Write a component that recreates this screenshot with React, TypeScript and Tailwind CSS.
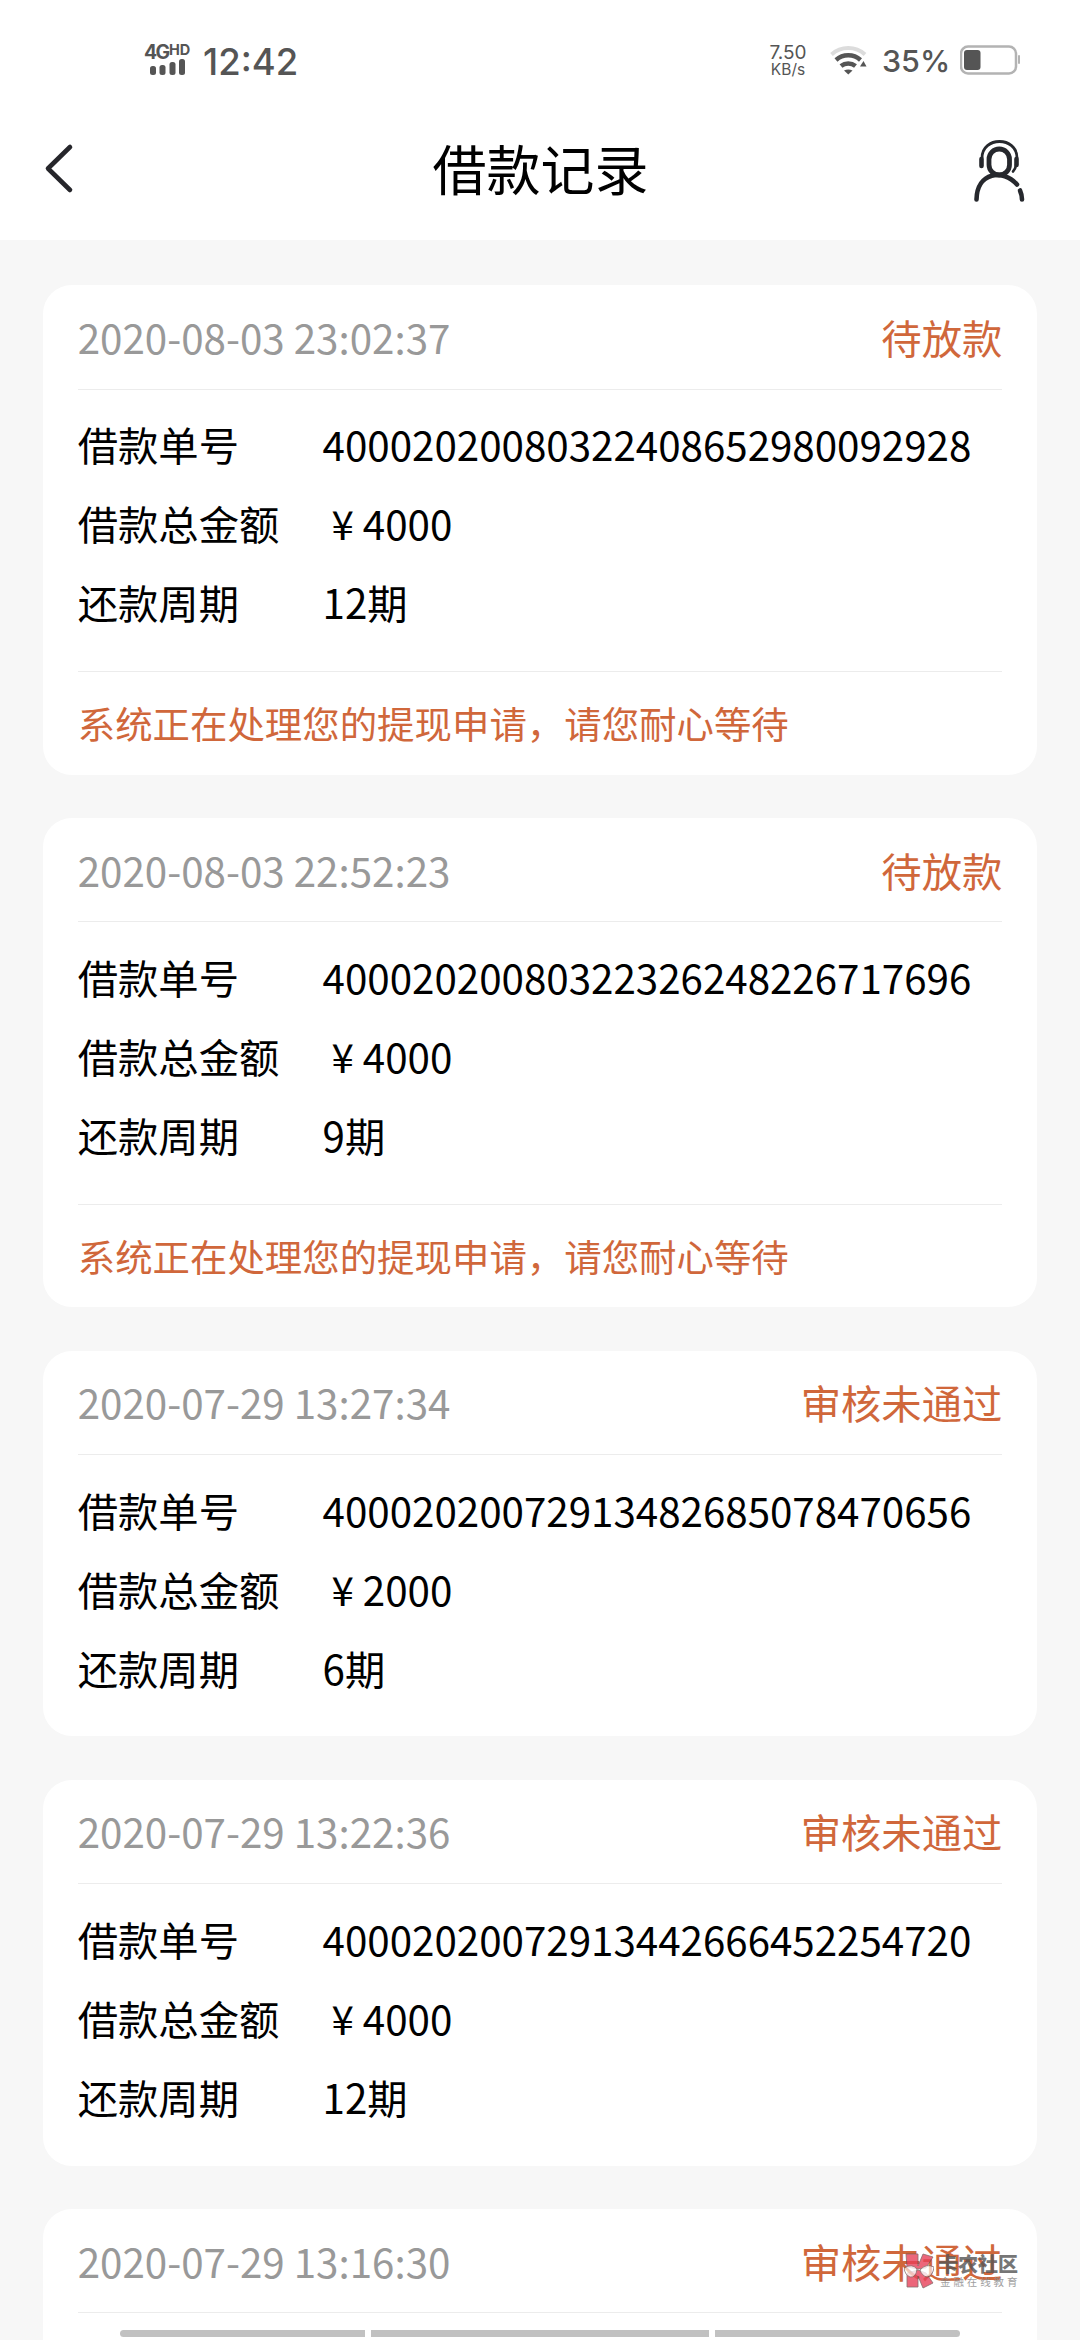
interface LoanRecord {
  time: string;
  status: string;
  orderNo?: string;
  amount?: string;
  period?: string;
  tip?: string;
}

const waiting = "系统正在处理您的提现申请，请您耐心等待";

const records: LoanRecord[] = [
  {
    time: "2020-08-03 23:02:37",
    status: "待放款",
    orderNo: "40002020080322408652980092928",
    amount: "4000",
    period: "12期",
    tip: waiting,
  },
  {
    time: "2020-08-03 22:52:23",
    status: "待放款",
    orderNo: "40002020080322326248226717696",
    amount: "4000",
    period: "9期",
    tip: waiting,
  },
  {
    time: "2020-07-29 13:27:34",
    status: "审核未通过",
    orderNo: "40002020072913482685078470656",
    amount: "2000",
    period: "6期",
  },
  {
    time: "2020-07-29 13:22:36",
    status: "审核未通过",
    orderNo: "40002020072913442666452254720",
    amount: "4000",
    period: "12期",
  },
  {
    time: "2020-07-29 13:16:30",
    status: "审核未通过",
  },
];

function StatusBar() {
  return (
    <div className="flex h-[120px] items-start justify-between pl-[144px] pr-[59px] font-['Inter',sans-serif] text-[#555]">
      <div className="flex items-start">
        <div className="mt-[44px] w-[48px]">
          <div className="flex h-[16px] items-start font-bold">
            <span className="w-[25px] text-[19.5px] leading-[17px] tracking-[-1.8px]">4G</span>
            <span className="text-[14.5px] leading-[12px]">HD</span>
          </div>
          <svg width="36" height="17" viewBox="0 0 36 17" className="-mt-[1px] ml-[6px]" fill="#555">
            <rect x="0" y="7" width="6" height="9" rx="2.5" />
            <rect x="9.5" y="6" width="6" height="10" rx="2.5" />
            <rect x="19.5" y="3" width="6" height="13" rx="2.5" />
            <rect x="29" y="0" width="6" height="16" rx="2.5" />
          </svg>
        </div>
        <span className="ml-[11px] mt-[40px] text-[36.5px] font-medium leading-[44px]">12:42</span>
      </div>

      <div className="flex items-start">
        <div className="mt-[43px] flex w-[36px] flex-col items-center whitespace-nowrap">
          <span className="text-[19px] leading-[19px]">7.50</span>
          <span className="text-[15.5px] leading-[15px]">KB/s</span>
        </div>
        <svg width="38" height="30" viewBox="0 0 38 30" className="ml-[24px] mt-[46px]" fill="none">
          <path d="M1.5 8.5 A25 25 0 0 1 35 8.5" stroke="#dcdcdc" strokeWidth="4" />
          <path d="M6 14 A18.5 18.5 0 0 1 30.500 14" stroke="#555" strokeWidth="4.500" />
          <path d="M11 20 A11.500 11.500 0 0 1 25.500 20" stroke="#555" strokeWidth="4.500" />
          <path d="M14 24.500 Q18.250 22.500 22.500 24.500 L18.250 28.500 Z" fill="#555" />
          <path d="M30 20.500 L33.500 15 L36.500 20.500 Z" fill="#555" />
        </svg>
        <span className="ml-[14px] mt-[42px] w-[66px] text-[30.5px] font-medium leading-[38px]">35%</span>
        <svg width="61" height="30" viewBox="0 0 61 30" className="ml-[12px] mt-[45px]" fill="none">
          <rect x="1" y="1.500" width="55" height="27" rx="7" stroke="#b3b3b3" strokeWidth="2.500" />
          <rect x="4" y="5" width="16.500" height="20" rx="3" fill="#555" />
          <rect x="58" y="10" width="2" height="9" rx="1" fill="#b3b3b3" />
        </svg>
      </div>
    </div>
  );
}

function Header() {
  return (
    <header className="flex h-[120px] items-start justify-between pl-[44px] pr-[55px]">
      <svg width="30" height="52" viewBox="0 0 30 52" className="mt-[22px]" fill="none">
        <path d="M26 5 L4 26.500 L26 48" stroke="#26262b" strokeWidth="4.600" strokeLinecap="round" strokeLinejoin="round" />
      </svg>
      <h1 className="ml-[34px] mt-[8px] text-[54px] leading-[80px] text-black">借款记录</h1>
      <svg width="52" height="64" viewBox="0 0 52 64" className="mt-[19px]" fill="none" stroke="#26282d" strokeLinecap="round">
        <path d="M9 19 C9 -3 44 -3 44 19" strokeWidth="2.800" />
        <path d="M8.500 20 V27" strokeWidth="4.600" />
        <path d="M43.500 20 V26" strokeWidth="4.600" />
        <path d="M43 26 Q42.500 30 40 32.500" strokeWidth="2.600" />
        <rect x="16" y="10" width="20.500" height="26" rx="10.250" strokeWidth="4.800" />
        <path d="M3.500 60.500 C4 33 30 29.500 44 45.500" strokeWidth="4.600" />
        <path d="M47 51.500 Q49 56 49 60.500" strokeWidth="4.600" />
      </svg>
    </header>
  );
}

function Row({ label, children }: { label: string; children: React.ReactNode }) {
  return (
    <div className="flex h-[79.2px] items-center">
      <span className="w-[244.8px]">{label}</span>
      <span>{children}</span>
    </div>
  );
}

function RecordCard({ record }: { record: LoanRecord }) {
  return (
    <section className="shrink-0 rounded-[28.8px] bg-white px-[34.56px] text-[40.32px] leading-[60px] text-black">
      <div className="flex h-[104.6px] items-center justify-between border-b border-[#ececec]">
        <span className="text-[#999]">{record.time}</span>
        <span className="text-[#d0673b]">{record.status}</span>
      </div>
      <div className="h-[281.32px] pt-[14.8px]">
        {record.orderNo && (
          <>
            <Row label="借款单号">{record.orderNo}</Row>
            <Row label="借款总金额">
              <span className="inline-block w-[1em] text-center">¥</span>
              {record.amount}
            </Row>
            <Row label="还款周期">{record.period}</Row>
          </>
        )}
      </div>
      {record.tip && (
        <div className="flex h-[103.68px] items-center border-t border-[#ececec] text-[37.44px] text-[#d0673b]">
          {record.tip}
        </div>
      )}
    </section>
  );
}

function Watermark() {
  return (
    <div className="absolute left-[904px] top-[2252px] flex opacity-80">
      <svg width="30" height="38" viewBox="0 0 30 38" stroke="#6b4a4a" strokeWidth="0.8">
        <path d="M2 2 H14 V14 L19 2 L29 5 L22 16 L14 17 L3 15 Z" fill="#e8405a" />
        <path d="M3 21 L14 18 L22 21 L29 31 L19 36 L14 24 V35 H3 Z" fill="#e8405a" />
        <path d="M0 16 Q8 11 13 17 Q12 26 6 25 Q1 23 0 16 Z" fill="#fff" fillOpacity="0.8" />
        <path d="M16 18 Q22 11 30 15 Q29 24 23 25 Q18 24 16 18 Z" fill="#fff" fillOpacity="0.8" />
      </svg>
      <div className="ml-[4px] whitespace-nowrap text-[#555]">
        <div className="text-[20px] font-black leading-[24px]">卡农社区</div>
        <div className="ml-[2px] text-[10.5px] leading-[12px] tracking-[2.9px] text-[#888]">金融在线教育</div>
      </div>
    </div>
  );
}

export default function App() {
  return (
    <div className="relative h-[2340px] w-[1080px] overflow-hidden bg-[#f7f7f7] font-['Noto_Sans_CJK_SC',sans-serif]">
      <div className="bg-white">
        <StatusBar />
        <Header />
      </div>

      <main className="flex flex-col gap-[43.2px] px-[43.2px] pt-[45px]">
        {records.map((record) => (
          <RecordCard key={record.time} record={record} />
        ))}
      </main>

      <Watermark />

      {/* gesture bar */}
      <div className="absolute left-[120px] top-[2330px] flex h-[7px] w-[840px] gap-[6px]">
        <div className="w-[245px] rounded-l-full bg-[#c1c1c1]" />
        <div className="flex-1 bg-[#c1c1c1]" />
        <div className="w-[245px] rounded-r-full bg-[#c1c1c1]" />
      </div>
    </div>
  );
}
